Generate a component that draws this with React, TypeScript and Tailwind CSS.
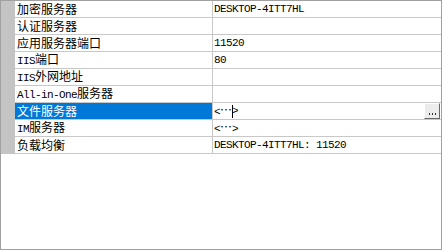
import React from 'react';

type Row = { label: string; value: string; selected?: boolean; button?: boolean };

const rows: Row[] = [
  { label: '加密服务器', value: 'DESKTOP-4ITT7HL' },
  { label: '认证服务器', value: '' },
  { label: '应用服务器端口', value: '11520' },
  { label: 'IIS端口', value: '80' },
  { label: 'IIS外网地址', value: '' },
  { label: 'All-in-One服务器', value: '' },
  { label: '文件服务器', value: '<⋯>', selected: true, button: true },
  { label: 'IM服务器', value: '<⋯>' },
  { label: '负载均衡', value: 'DESKTOP-4ITT7HL: 11520' },
];

// ascii runs get the half-width mono face, the rest gets the CJK face
function Mixed({ text }: { text: string }) {
  const parts = text.split(/([\x00-\x7f]+)/).filter(Boolean);
  return (
    <span className="flex items-baseline">
      {parts.map((p, i) =>
        /^[\x00-\x7f]+$/.test(p) ? (
          <span
            key={i}
            className="font-['Liberation_Mono',monospace] text-[11px] tracking-[-0.6px] whitespace-pre"
          >
            {p}
          </span>
        ) : (
          <span key={i} className="font-['Noto_Sans_CJK_SC',sans-serif] text-[12px]">
            {p}
          </span>
        )
      )}
    </span>
  );
}

function EditValue({ text }: { text: string }) {
  // text is "<⋯>", caret sits just before the closing bracket
  const head = text.slice(0, -1);
  const tail = text.slice(-1);
  return (
    <span className="flex items-center">
      <Mixed text={head} />
      <span className="inline-block w-px h-[13px] bg-black mr-[-1px]" />
      <Mixed text={tail} />
    </span>
  );
}

export default function App() {
  return (
    <div className="w-[442px] h-[250px] bg-white border border-[#a0a0a0] overflow-hidden leading-[16px] text-black">
      {rows.map((r) => (
        <div key={r.label} className="flex h-[17px]">
          <div className="w-[14px] bg-[#c4c4c4]" />
          <div className="flex flex-1 border-b border-[#c8c8c8]">
            <div
              className={
                'w-[198px] border-r border-[#c8c8c8] pl-[2px] flex items-center ' +
                (r.selected ? 'bg-[#0078d7] text-white' : '')
              }
            >
              <Mixed text={r.label} />
            </div>
            <div className="flex-1 flex items-center pl-[1px]">
              {r.selected ? <EditValue text={r.value} /> : <Mixed text={r.value} />}
              {r.button && (
                <div className="ml-auto mr-[1px] w-[16px] h-[16px] bg-[#ececec] border-t border-l border-t-white border-l-white border-r border-b border-r-[#696969] border-b-[#696969] flex items-end justify-center gap-[2px] pb-[3px]">
                  <span className="w-px h-[2px] bg-[#333]" />
                  <span className="w-px h-[2px] bg-[#333]" />
                  <span className="w-px h-[2px] bg-[#333]" />
                </div>
              )}
            </div>
          </div>
        </div>
      ))}
    </div>
  );
}
